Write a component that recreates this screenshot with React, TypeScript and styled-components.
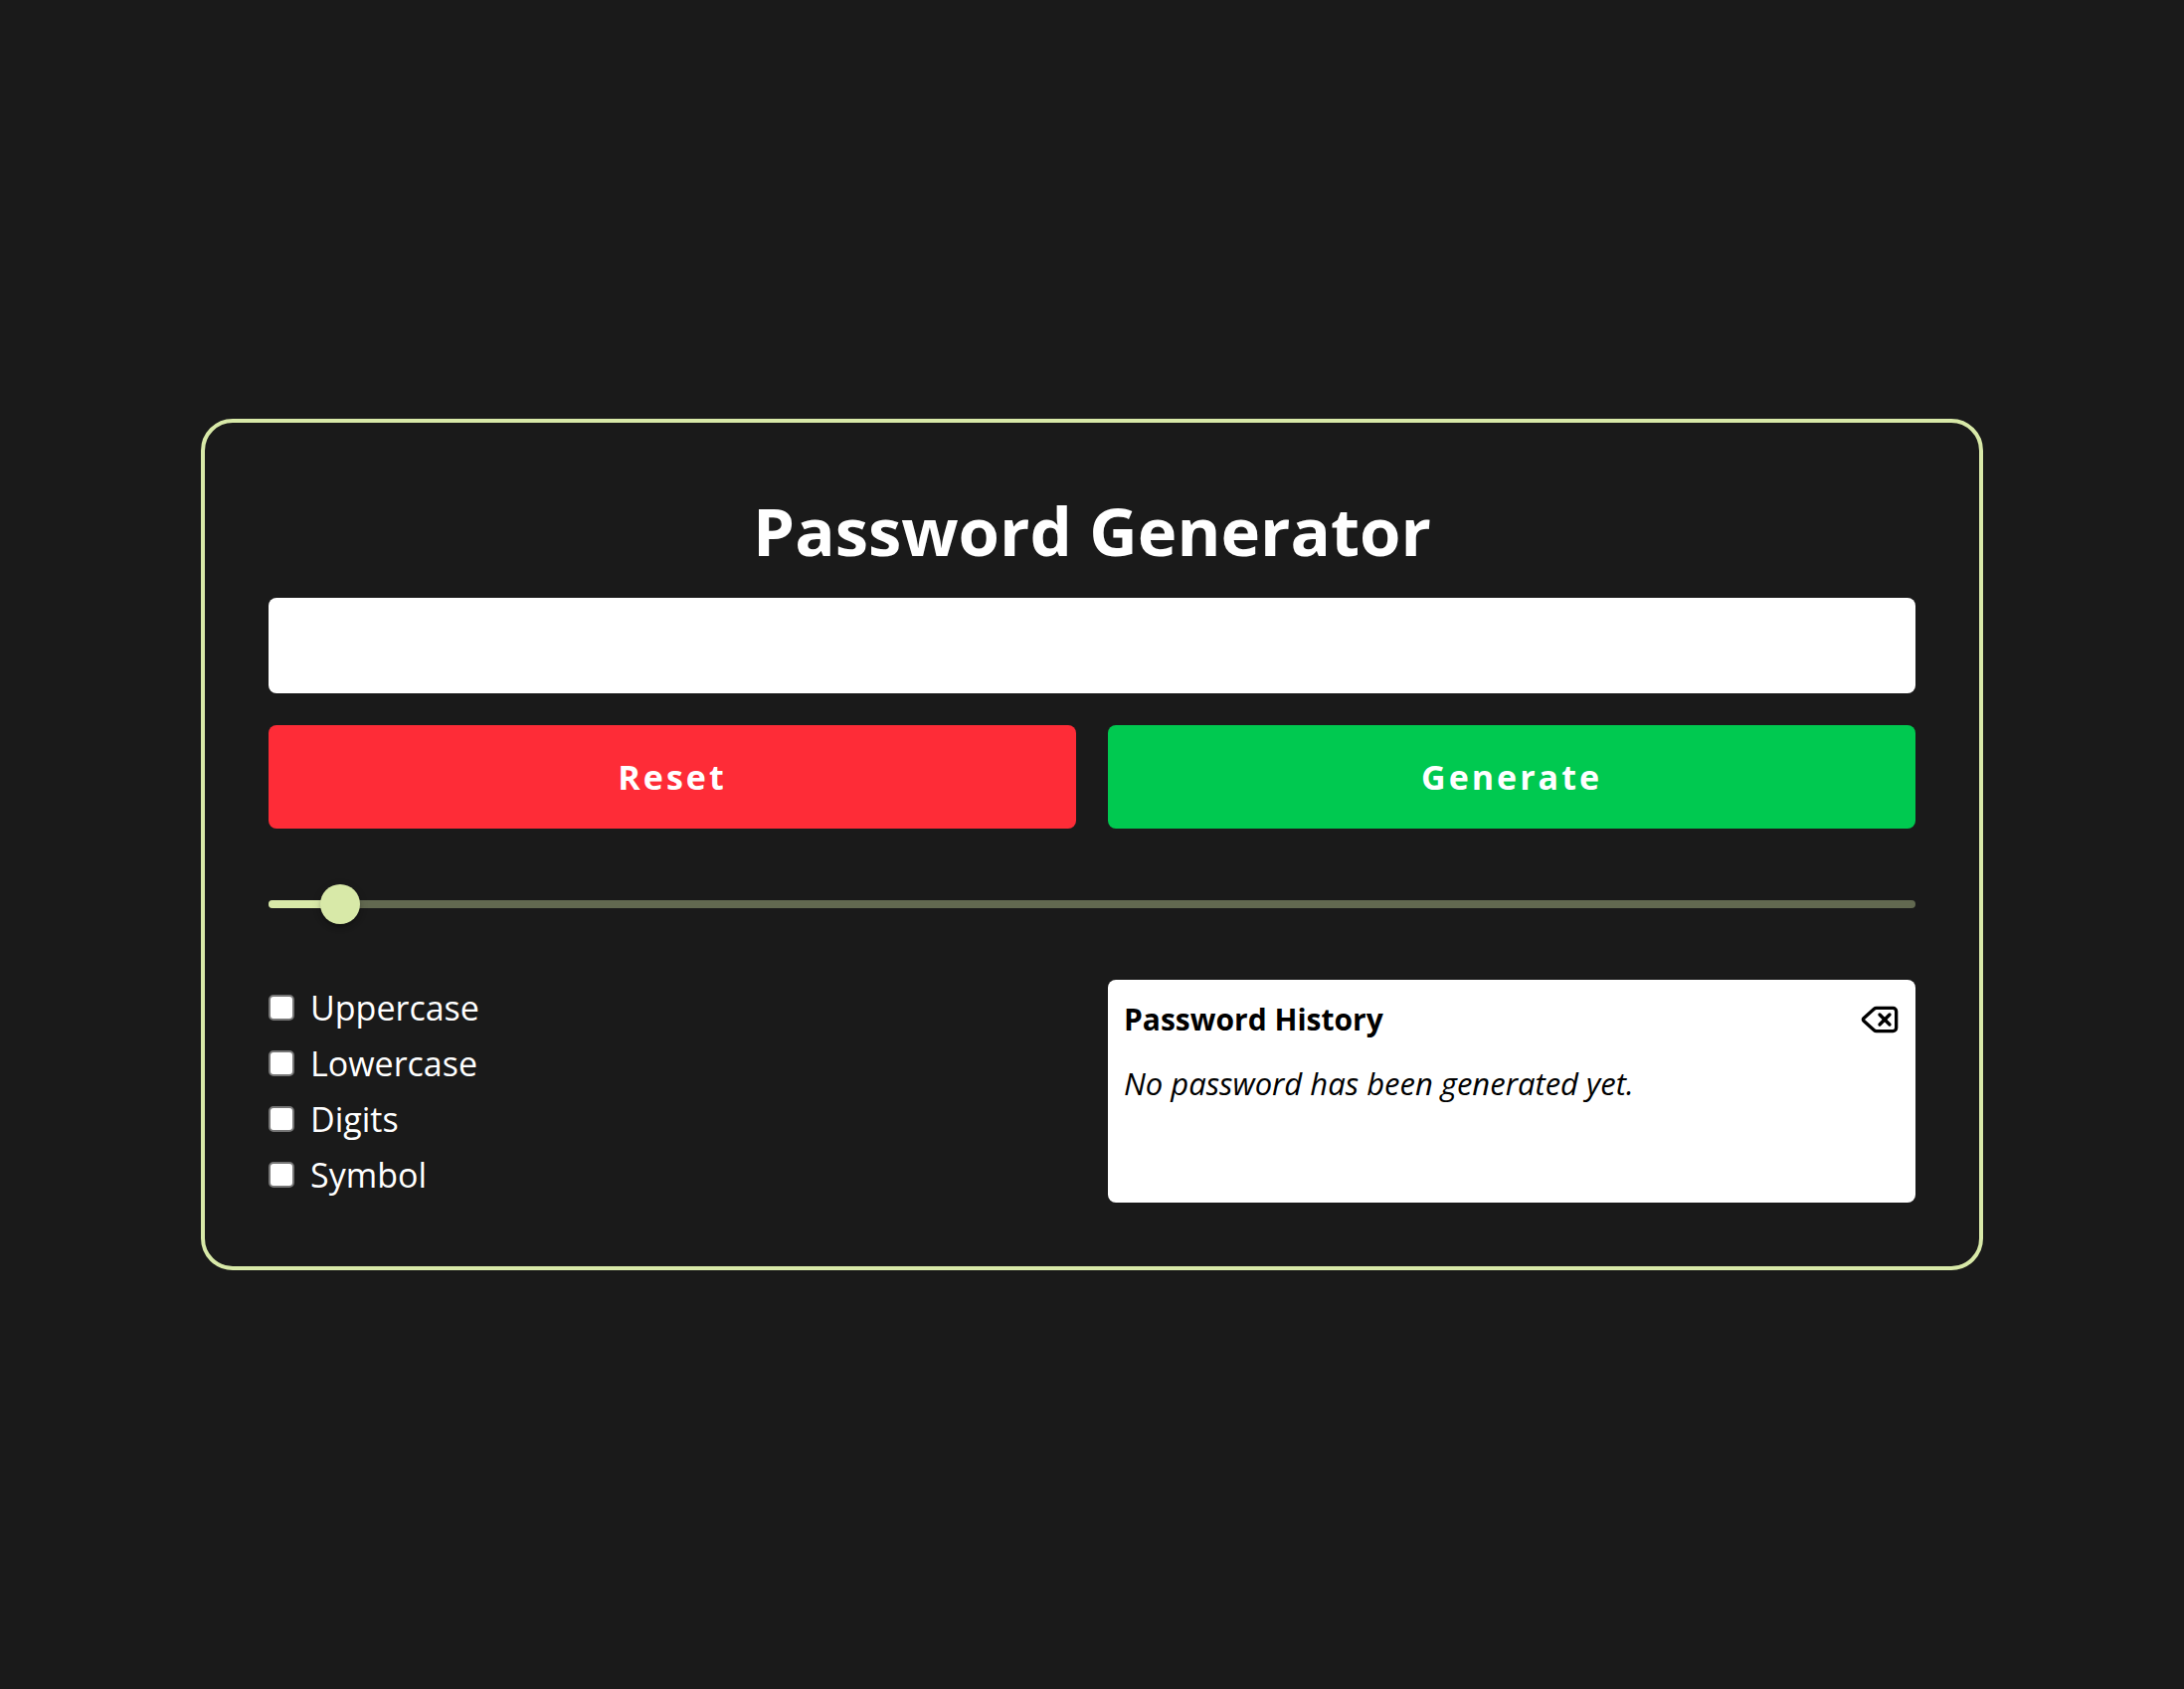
import React, { useId, useState } from 'react';
import styled, { createGlobalStyle } from 'styled-components';
import { Delete } from 'lucide-react';

const ACCENT = '#d8e9a8';
const SURFACE = '#1a1a1a';
const MIN_LENGTH = 8;
const MAX_LENGTH = 100;

const GlobalStyle = createGlobalStyle`
  *, *::before, *::after { box-sizing: border-box; }
  body {
    margin: 0;
    background: ${SURFACE};
    color: #fff;
    font-family: "Segoe UI", "Open Sans", "Noto Sans", sans-serif;
  }
  h1, h2, p { margin: 0; }
  button, input { font: inherit; }
`;

const Page = styled.main`
  min-height: 100vh;
  display: flex;
  align-items: center;
  justify-content: center;
`;

const Card = styled.section`
  width: 100%;
  max-width: 1792px;
  padding: 72px 64px 64px;
  border: 4px solid ${ACCENT};
  border-radius: 32px;
  display: flex;
  flex-direction: column;
  gap: 32px;
`;

const Title = styled.h1`
  font-size: 67px;
  line-height: 72px;
  font-weight: 700;
  text-align: center;
`;

const PasswordField = styled.input`
  width: 100%;
  height: 96px;
  padding: 16px;
  border: 0;
  border-radius: 8px;
  background: #fff;
  color: #000;
  font-size: 34px;
  text-align: center;
`;

const Columns = styled.div`
  display: grid;
  grid-template-columns: 1fr 1fr;
  gap: 32px;
`;

const ActionButton = styled.button<{ $color: string }>`
  padding: 24px;
  border: 0;
  border-radius: 8px;
  background: ${(p) => p.$color};
  color: #fff;
  font-size: 34px;
  line-height: 56px;
  font-weight: 700;
  letter-spacing: 3px;
  cursor: pointer;
`;

const Slider = styled.div`
  display: grid;
  align-items: center;
  height: 88px;

  > * { grid-area: 1 / 1; }
`;

const Rail = styled.div`
  height: 8px;
  border-radius: 4px;
  overflow: hidden;
  background: #626950;
`;

const Fill = styled.div`
  height: 100%;
  background: ${ACCENT};
`;

const Range = styled.input`
  appearance: none;
  margin: 0 -20px;
  height: 40px;
  background: transparent;
  cursor: pointer;

  &::-webkit-slider-thumb {
    appearance: none;
    width: 40px;
    height: 40px;
    border-radius: 50%;
    background: ${ACCENT};
    box-shadow: 0 6px 2px -4px rgba(0, 0, 0, 0.2), 0 4px 4px rgba(0, 0, 0, 0.14),
      0 2px 10px rgba(0, 0, 0, 0.12);
  }
`;

const Options = styled.div`
  display: flex;
  flex-direction: column;
`;

const Option = styled.label`
  display: flex;
  align-items: baseline;
  align-self: flex-start;
  gap: 16px;
  font-size: 34px;
  line-height: 56px;
`;

const Checkbox = styled.input`
  appearance: none;
  width: 26px;
  height: 26px;
  margin: 0 0 2px;
  border: 2px solid #767676;
  border-radius: 5px;
  background: #fff;

  &:checked { background: ${ACCENT}; }
`;

const History = styled.section`
  min-height: 224px;
  padding: 16px;
  border-radius: 8px;
  background: #fff;
  color: #000;
  display: flex;
  flex-direction: column;
  gap: 16px;
  font-size: 31px;
  line-height: 48px;
`;

const HistoryHeader = styled.header`
  display: flex;
  align-items: center;
  justify-content: space-between;
`;

const HistoryTitle = styled.h2`
  font-size: 30px;
  line-height: 48px;
  font-weight: 700;
`;

const IconButton = styled.button`
  display: flex;
  padding: 0;
  border: 0;
  background: none;
  color: inherit;
  cursor: pointer;
`;

const Empty = styled.p`
  font-style: italic;
`;

const CHARSETS: Record<string, string> = {
  Uppercase: 'ABCDEFGHIJKLMNOPQRSTUVWXYZ',
  Lowercase: 'abcdefghijklmnopqrstuvwxyz',
  Digits: '0123456789',
  Symbol: '!@#$%^&*()-_=+[]{};:,.?',
};

export default function App() {
  const id = useId();
  const [length, setLength] = useState(12);
  const [password, setPassword] = useState('');
  const [selected, setSelected] = useState<string[]>([]);
  const [history, setHistory] = useState<string[]>([]);

  const toggle = (name: string) =>
    setSelected((s) => (s.includes(name) ? s.filter((n) => n !== name) : [...s, name]));

  const generate = () => {
    const pool = selected.map((name) => CHARSETS[name]).join('');
    if (!pool) return;
    const next = Array.from({ length }, () => pool[Math.floor(Math.random() * pool.length)]).join('');
    setPassword(next);
    setHistory((h) => [next, ...h]);
  };

  const reset = () => {
    setPassword('');
    setSelected([]);
    setLength(12);
  };

  const percent = ((length - MIN_LENGTH) / (MAX_LENGTH - MIN_LENGTH)) * 100;

  return (
    <>
      <GlobalStyle />
      <Page>
        <Card>
          <Title>Password Generator</Title>
          <PasswordField type="text" aria-label="Generated password" value={password} readOnly />
          <Columns>
            <ActionButton type="button" $color="#fe2c37" onClick={reset}>Reset</ActionButton>
            <ActionButton type="button" $color="#00c950" onClick={generate}>Generate</ActionButton>
          </Columns>
          <Slider>
            <Rail>
              <Fill style={{ width: `${percent}%` }} />
            </Rail>
            <Range
              type="range"
              aria-label="Password length"
              min={MIN_LENGTH}
              max={MAX_LENGTH}
              value={length}
              onChange={(e) => setLength(Number(e.target.value))}
            />
          </Slider>
          <Columns>
            <Options>
              {Object.keys(CHARSETS).map((name) => (
                <Option key={name} htmlFor={`${id}-${name}`}>
                  <Checkbox
                    id={`${id}-${name}`}
                    type="checkbox"
                    checked={selected.includes(name)}
                    onChange={() => toggle(name)}
                  />
                  {name}
                </Option>
              ))}
            </Options>
            <History>
              <HistoryHeader>
                <HistoryTitle>Password History</HistoryTitle>
                <IconButton type="button" aria-label="Clear history" onClick={() => setHistory([])}>
                  <Delete size={40} />
                </IconButton>
              </HistoryHeader>
              {history.length === 0 ? (
                <Empty>No password has been generated yet.</Empty>
              ) : (
                history.map((entry, i) => <p key={i}>{entry}</p>)
              )}
            </History>
          </Columns>
        </Card>
      </Page>
    </>
  );
}
